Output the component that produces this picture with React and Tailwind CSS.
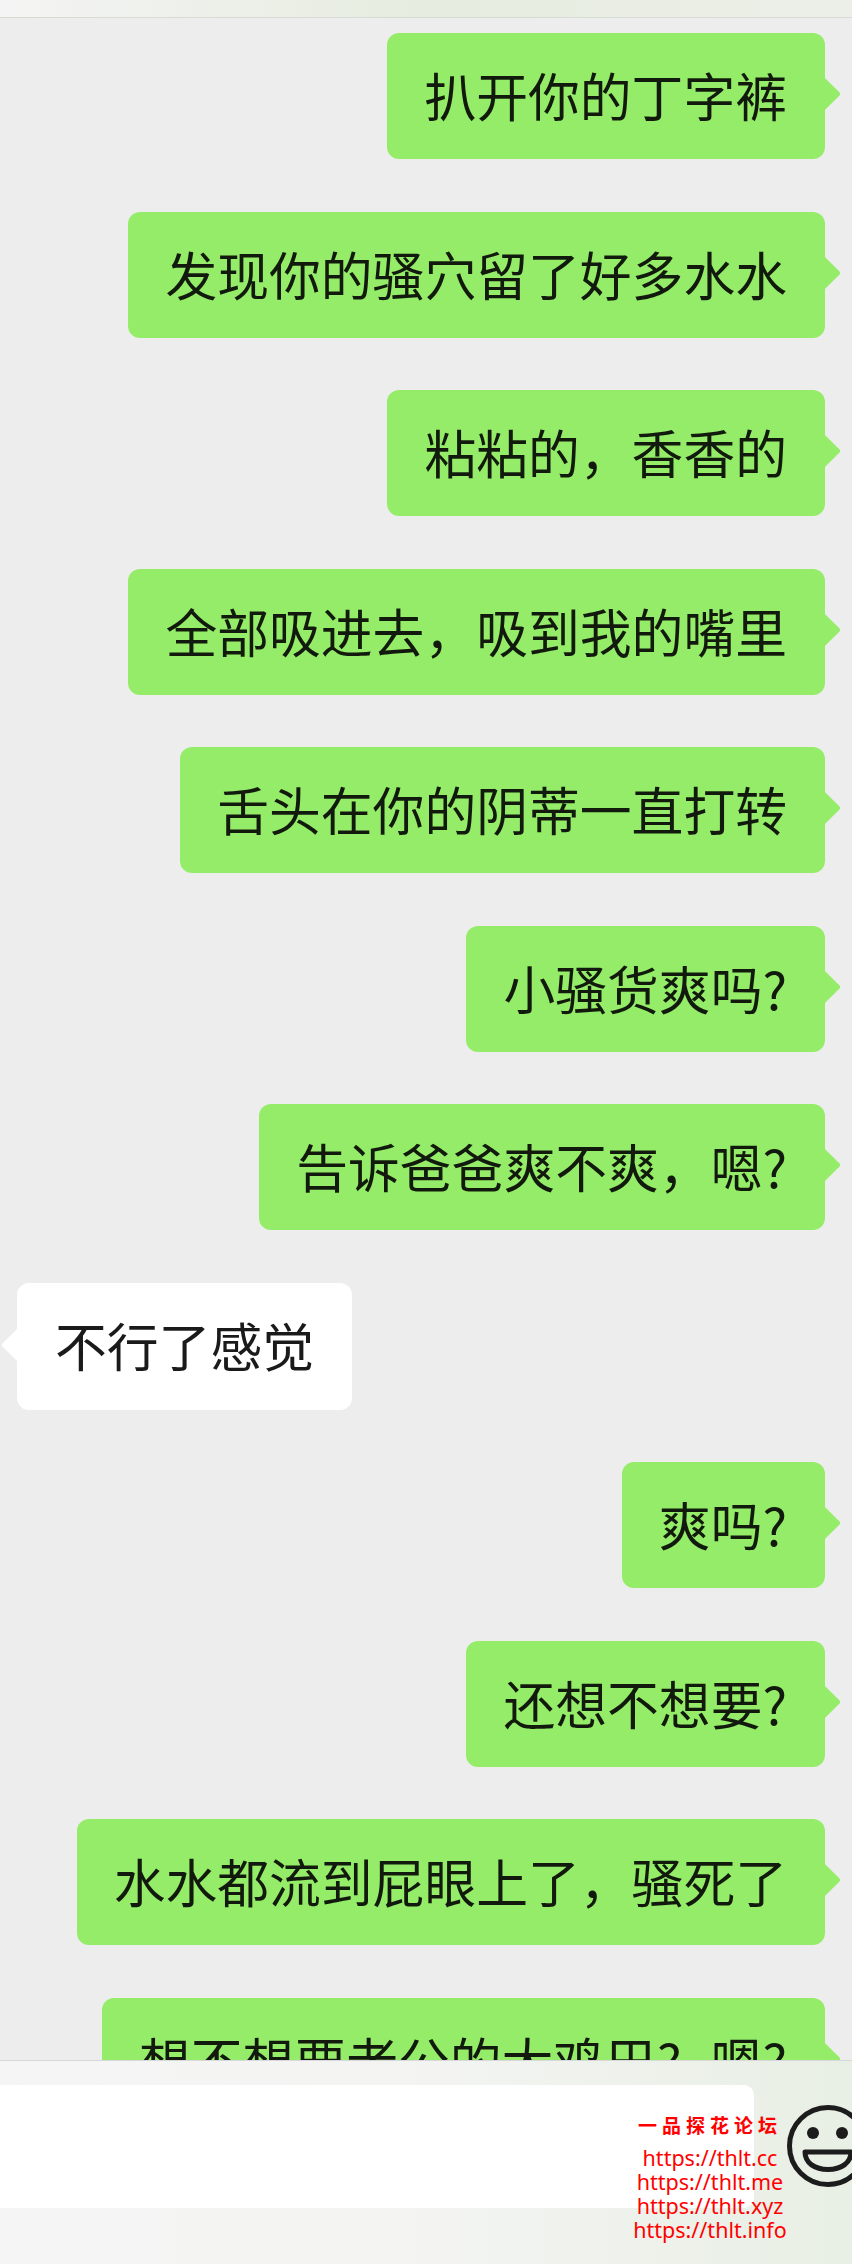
const messages = [
  { text: "扒开你的丁字裤" },
  { text: "发现你的骚穴留了好多水水" },
  { text: "粘粘的，香香的" },
  { text: "全部吸进去，吸到我的嘴里" },
  { text: "舌头在你的阴蒂一直打转" },
  { text: "小骚货爽吗?" },
  { text: "告诉爸爸爽不爽，嗯?" },
  { text: "不行了感觉", incoming: true },
  { text: "爽吗?" },
  { text: "还想不想要?" },
  { text: "水水都流到屁眼上了，骚死了" },
  { text: "想不想要老公的大鸡巴?\u2002\u200a嗯?" },
];

const watermarkLinks = [
  "https://thlt.cc",
  "https://thlt.me",
  "https://thlt.xyz",
  "https://thlt.info",
];

const Bubble = ({ text, incoming }) => {
  if (incoming) {
    return (
      <div className="relative ml-[17px] flex h-[127px] shrink-0 items-center self-start rounded-[12px] bg-white pb-[2px] pl-[38px] pr-[38px] text-[#1a1a1a]">
        <div className="absolute left-[-11px] top-[50px] h-[24px] w-[24px] rotate-45 rounded-[2px] bg-white" />
        <span className="relative whitespace-nowrap">{text}</span>
      </div>
    );
  }

  return (
    <div className="relative mr-[27px] flex h-[126px] shrink-0 items-center self-end rounded-[12px] bg-[#95ec69] pb-[2px] pl-[37px] pr-[38px] text-[#111a0c]">
      <div className="absolute right-[-11px] top-[49px] h-[24px] w-[24px] rotate-45 rounded-[2px] bg-[#95ec69]" />
      <span className="relative whitespace-nowrap">{text}</span>
    </div>
  );
};

const SmileIcon = () => (
  <svg width="82" height="82" viewBox="0 0 82 82" fill="none" className="shrink-0">
    <circle cx="41" cy="41" r="38.5" stroke="#1c1c1c" strokeWidth="5" />
    <circle cx="26" cy="28" r="6" fill="#1c1c1c" />
    <circle cx="55" cy="28" r="6" fill="#1c1c1c" />
    <path
      d="M18 47H64C64 58 54 64.5 41 64.5C28 64.5 18 58 18 47Z"
      stroke="#1c1c1c"
      strokeWidth="5"
      strokeLinejoin="round"
    />
  </svg>
);

export default function App() {
  return (
    <div className="flex h-[2264px] w-[852px] flex-col overflow-hidden bg-[#ededed] font-['Noto_Sans_CJK_SC',sans-serif]">
      <div className="h-[18px] shrink-0 border-b border-[#d8dad4] bg-gradient-to-r from-[#f4f4f4] via-[#e6ecdf] to-[#ecefe8]" />

      <div className="flex min-h-0 flex-1 flex-col gap-[52.5px] overflow-hidden pt-[15px] text-[51.8px] leading-none">
        {messages.map((message) => (
          <Bubble key={message.text} {...message} />
        ))}
      </div>

      <div className="relative h-[204px] shrink-0 border-t border-[#d8d8d8] bg-gradient-to-r from-[#f5f5f5] via-[#f3f4f2] to-[#e8efe4]">
        <div className="mt-[24px] flex items-start">
          <div className="h-[123px] w-[754px] shrink-0 rounded-r-[10px] bg-white" />
          <div className="ml-[33px] mt-[20px]">
            <SmileIcon />
          </div>
        </div>

        <div className="absolute left-[634px] top-[52px] flex w-[152px] flex-col items-center text-[#ff0000]">
          <div className="h-[24px] whitespace-nowrap text-[19px] font-bold leading-[24px] tracking-[5px]">
            一品探花论坛
          </div>
          <div className="mt-[9px] flex flex-col items-center font-['Noto_Sans',sans-serif] text-[21.5px] leading-[24px]">
            {watermarkLinks.map((link) => (
              <span key={link} className="whitespace-nowrap">
                {link}
              </span>
            ))}
          </div>
        </div>
      </div>
    </div>
  );
}
